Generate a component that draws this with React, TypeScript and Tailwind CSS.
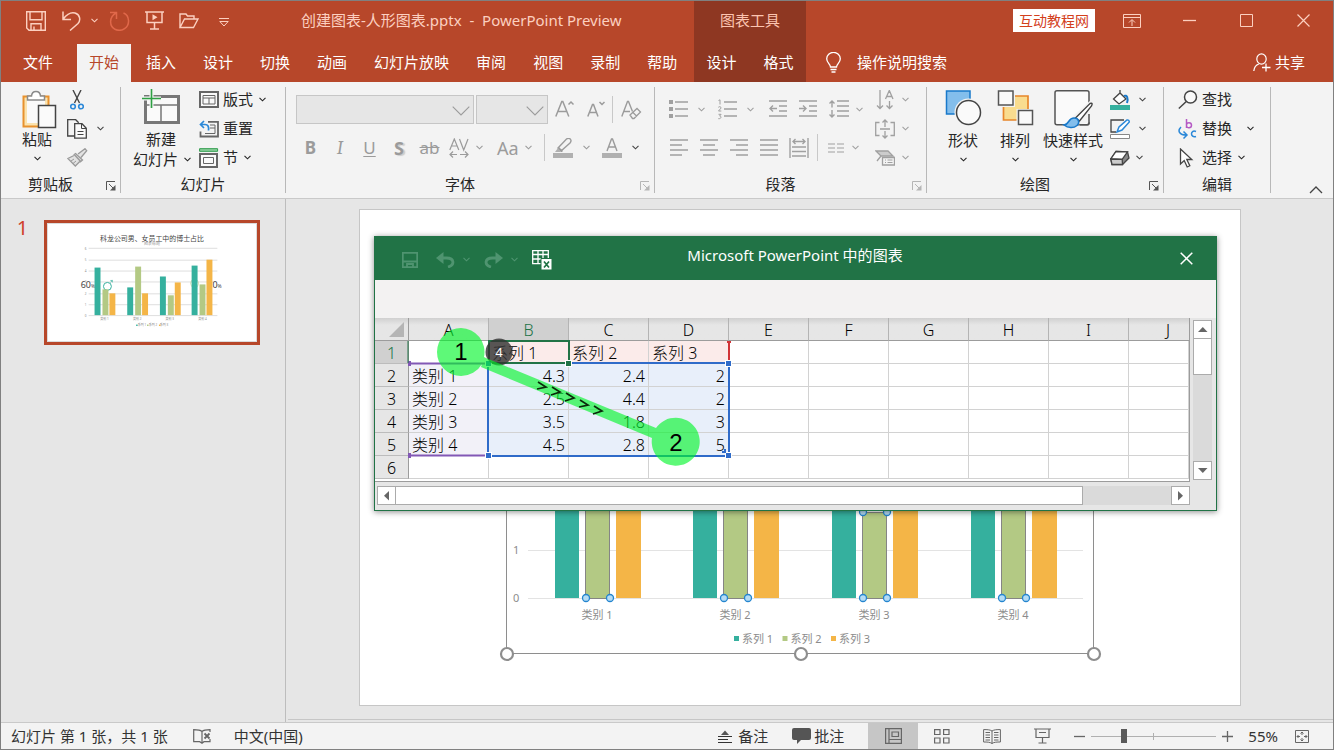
import { type ReactNode } from "react";
import { clsx } from "clsx";

/* ---------- shared bits ---------- */

function Ico({ w = 20, h = 20, className, children }: { w?: number; h?: number; className?: string; children: ReactNode }) {
  return (
    <svg
      width={w}
      height={h}
      viewBox={`0 0 ${w} ${h}`}
      fill="none"
      stroke="currentColor"
      className={clsx("shrink-0", className)}
      aria-hidden="true"
    >
      {children}
    </svg>
  );
}

function Chevron({ className }: { className?: string }) {
  return (
    <Ico w={7} h={5} className={className}>
      <path d="M.5 .8 3.5 3.8 6.5 .8" strokeWidth="1.1" />
    </Ico>
  );
}

function Btn({ label, className, children }: { label?: string; className?: string; children: ReactNode }) {
  return (
    <button type="button" aria-label={label} className={clsx("flex shrink-0 items-center", className)}>
      {children}
    </button>
  );
}

function Group({ label, launcher, className, children }: { label: string; launcher?: "on" | "off"; className?: string; children: ReactNode }) {
  return (
    <>
      <section className={clsx("flex shrink-0 flex-col", className)} aria-label={label}>
        <div className="flex-1">{children}</div>
        <div className="flex h-6 items-center pb-1">
          <span className="flex-1 text-center text-[15px] leading-5">{label}</span>
          {launcher && (
            <Btn label={`${label}设置`} className={clsx("w-5 pl-1.5 pt-1", launcher === "off" ? "text-[#b5b5b5]" : "text-[#555]")}>
              <Ico w={10} h={10}>
                <path d="M.5 9V.5H9M3 3l5 5" />
                <path d="M9.5 4v5.500H4z" fill="currentColor" stroke="none" />
              </Ico>
            </Btn>
          )}
        </div>
      </section>
      <div className="my-[5px] w-px shrink-0 bg-[#b8b8b8]" />
    </>
  );
}

/* ---------- title bar and tabs ---------- */

const tabs = ["插入", "设计", "切换", "动画", "幻灯片放映", "审阅", "视图", "录制", "帮助"];

function Header() {
  return (
    <header className="flex h-[81px] bg-[#b7472a] text-white">
      <div className="flex w-[693px] shrink-0 flex-col">
        <div className="flex h-[43px] items-center pb-1 pl-[25px] text-[#fcd0c0]">
          <Btn label="保存" className="w-9">
            <Ico>
              <path d="M.7.7h18.6v18.6H3L.7 17z M4 .7v8h12v-8 M5 19.3v-6.500h10v6.500 M8 19v-3.500" strokeWidth="1.4" />
            </Ico>
          </Btn>
          <Btn label="撤消" className="w-[47px] gap-2.5">
            <Ico w={19} h={20}>
              <path d="M1 .5v8h8M1.300 8C5 3 9 1 13 2c5 1.500 6 7 3 10.500L8 19.500" strokeWidth="1.5" />
            </Ico>
            <Chevron />
          </Btn>
          <Btn label="恢复" className="w-9 text-[#e0684a]">
            <Ico w={21} h={20}>
              <path d="M1 1.500h6.500V8M7 2C0 6 0 15 6 18.300c7 3.200 14-2 13.500-9C19.300 6 17 3 14.500 2" strokeWidth="1.5" />
            </Ico>
          </Btn>
          <Btn label="从头开始" className="w-[34px]">
            <Ico w={19} h={19}>
              <path d="M0 1h19M2 1v10.500h15V1M9.500 11.500V18M5 18h9" strokeWidth="1.5" />
              <path d="m7.500 3.200 5 3-5 3z" fill="currentColor" stroke="none" />
            </Ico>
          </Btn>
          <Btn label="打开" className="w-10">
            <Ico w={20} h={16}>
              <path d="M1 14.500V1h6l1.500 2H15v3M1 14.500 5.500 6H19l-4.500 8.500z" strokeWidth="1.4" />
            </Ico>
          </Btn>
          <Btn label="自定义快速访问工具栏">
            <Ico w={10} h={9} className="mt-1">
              <path d="M0 .5h10M.8 3.500h8.400L5 8z" />
            </Ico>
          </Btn>
          <h1 className="ml-[72px] whitespace-pre text-[15px]">创建图表-人形图表.pptx  -  PowerPoint Preview</h1>
        </div>
        <nav className="flex flex-1 gap-[3px] pl-2.5 text-[15px]">
          <button className="mr-[9px] px-3 pb-0.5">文件</button>
          <button className="bg-[#f3f3f3] px-3 pb-0.5 text-[#b7472a]">开始</button>
          {tabs.map((t) => (
            <button key={t} className="px-3 pb-0.5">
              {t}
            </button>
          ))}
        </nav>
      </div>

      {/* contextual tab set */}
      <div className="flex w-28 shrink-0 flex-col bg-[#8e3722] text-[15px]">
        <div className="flex h-[43px] items-center justify-center pb-1 text-[#fcc4b0]">图表工具</div>
        <div className="flex flex-1 items-center justify-center gap-[27px] pb-0.5">
          <button>设计</button>
          <button>格式</button>
        </div>
      </div>

      <div className="flex flex-1 flex-col">
        <div className="flex h-[43px] items-center justify-end pb-1 pr-[23px] text-[#fcd0c0]">
          <span className="mr-7 bg-white px-1.5 text-[14px] leading-[23px] text-[#d3401c]">互动教程网</span>
          <Btn label="功能区显示选项" className="mr-[42px]">
            <Ico w={18} h={14}>
              <path d="M.5.5h17v13H.5zM.5 3.500h17M9 12V6M6 8.500l3-3 3 3" />
            </Ico>
          </Btn>
          <Btn label="最小化" className="mr-11">
            <Ico w={13} h={13}>
              <path d="M0 6.500h13" strokeWidth="1.300" />
            </Ico>
          </Btn>
          <Btn label="最大化" className="mr-11">
            <Ico w={13} h={13}>
              <path d="M.5.5h12v12H.5z" />
            </Ico>
          </Btn>
          <Btn label="关闭">
            <Ico w={13} h={13}>
              <path d="m.5.500 12 12M12.500.5l-12 12" strokeWidth="1.200" />
            </Ico>
          </Btn>
        </div>
        <div className="flex flex-1 items-center justify-between pb-0.5 pl-5 pr-7 text-[15px]">
          <Btn className="gap-4">
            <Ico w={15} h={21}>
              <path d="M4.500 15c0-3-3.800-4-3.800-8.200A6.700 6.300 0 0 1 14.300 6.800c0 4.200-3.800 5.200-3.800 8.200zM4.500 17.500h6M5.500 20h4" strokeWidth="1.300" />
            </Ico>
            操作说明搜索
          </Btn>
          <Btn className="gap-1">
            <Ico w={18} h={19}>
              <ellipse cx="8.500" cy="6" rx="4.700" ry="5.200" strokeWidth="1.200" />
              <path d="M.8 18c.4-4 2.200-6 5-7M13 18.500v-8M9 14.500h8.500" strokeWidth="1.300" />
            </Ico>
            共享
          </Btn>
        </div>
      </div>
    </header>
  );
}

/* ---------- ribbon ---------- */

function ClipboardGroup() {
  return (
    <Group label="剪贴板" launcher="on" className="w-[119px]">
      <div className="flex pt-[3px]">
        <Btn className="ml-[14px] w-11 flex-col pt-[5px] text-[15px] leading-5">
          <Ico w={36} h={39} className="ml-1">
            <path d="M2.500 6.500h25v30h-25z" stroke="#e8912d" strokeWidth="2" fill="#fbe3ae" />
            <path d="M6 10h18v23H6z" fill="#fafafa" stroke="none" />
            <path d="M6.500 10V6h4C11 0 19 0 19.500 6h4v4z" fill="#fff" stroke="#8a8a8a" strokeWidth="1.500" />
            <path d="M17.500 15.500h17v22h-17z" fill="#fafafa" stroke="#444" strokeWidth="1.500" />
          </Ico>
          粘贴
          <Chevron className="mt-[7px]" />
        </Btn>
        <div className="ml-2">
          <Btn label="剪切" className="h-[29px] pl-[3px]">
            <Ico w={14} h={20}>
              <path d="M3 0l6.500 13M11 0 4.500 13" stroke="#444" strokeWidth="1.400" />
              <circle cx="3" cy="16.500" r="2.300" stroke="#2b88d8" strokeWidth="1.600" />
              <circle cx="11" cy="16.500" r="2.300" stroke="#2b88d8" strokeWidth="1.600" />
            </Ico>
          </Btn>
          <Btn label="复制" className="h-[29px] gap-2.5 text-[#444]">
            <Ico w={20} h={20}>
              <path d="M7.500 17H.7V.7h8l3 3" strokeWidth="1.300" />
              <path d="M7.700 4.700h7.300l4.300 4.500v10H7.700z" fill="#fafafa" strokeWidth="1.300" />
              <path d="M14.500 5v4.500H19M10.500 12.500h6M10.500 15.500h6" />
            </Ico>
            <Chevron />
          </Btn>
          <Btn label="格式刷" className="h-[29px] text-[#9a9a9a]">
            <Ico w={21} h={19}>
              <path d="m11 6 7-5.300 1.700 2L14 9.500M8.500 5.500l7 6.500-1.800 1.500-6.500-7zM7 7.500.8 10.500l7.500 7.500 5-5" fill="#e2e2e2" strokeWidth="1.300" />
              <path d="m4 13 3-2M6 15.500l3-2.500" />
            </Ico>
          </Btn>
        </div>
      </div>
    </Group>
  );
}

function SlidesGroup() {
  return (
    <Group label="幻灯片" className="w-[164px]">
      <div className="flex pt-[3px]">
        <Btn className="ml-[10px] w-[60px] flex-col pt-1 text-[15px] leading-5">
          <Ico w={38} h={36}>
            <path d="M3.500 7.500h33v26h-33z" stroke="#777" strokeWidth="3" fill="#fafafa" />
            <path d="M5 16h30M19 16v17" stroke="#777" strokeWidth="1.500" />
            <path d="M0 9.500h19M9.500 0v19" stroke="#f3f3f3" strokeWidth="4" />
            <path d="M0 9.500h19M9.500 0v19" stroke="#2ea043" strokeWidth="1.600" />
          </Ico>
          <span className="mt-1">新建</span>
          <span className="flex items-center gap-1.5 pl-0.5">
            幻灯片
            <Chevron />
          </span>
        </Btn>
        <div className="ml-2 text-[15px]">
          <Btn className="h-[29px] gap-1">
            <Ico w={20} h={17} className="text-[#666]">
              <path d="M1 1h18v15H1z" strokeWidth="2" fill="#fafafa" />
              <path d="M4 4.500h12v8.500H4zM4 7h12M10 7v6" />
            </Ico>
            版式
            <Chevron className="ml-0.5" />
          </Btn>
          <Btn className="h-[29px] gap-1">
            <Ico w={20} h={18} className="text-[#666]">
              <path d="M9 1.800h10v14.700H1.500v-5" strokeWidth="1.800" />
              <path d="M11 5h5v8.500H6M11 8h5" />
              <path d="M5 1 1.500 4.500 5 8M2 4.500h4c3 0 4 2 3.500 6" stroke="#2b88d8" strokeWidth="1.700" />
            </Ico>
            重置
          </Btn>
          <Btn className="h-[29px] gap-1">
            <Ico w={20} h={20} className="text-[#666]">
              <path d="M.6.700h18v2.600H.6z" fill="#8fd19e" stroke="#2e9b4b" />
              <path d="M1 6h17v13H1z" strokeWidth="2" fill="#fafafa" />
              <path d="M4.500 9.500h10v6h-10z" />
            </Ico>
            节
            <Chevron className="ml-0.5" />
          </Btn>
        </div>
      </div>
    </Group>
  );
}

function Combo({ label, className }: { label: string; className: string }) {
  return (
    <div className={clsx("relative h-[29px]", className)}>
      <select aria-label={label} disabled className="h-full w-full appearance-none border border-[#c6c6c6] bg-[#e6e6e6]" />
      <Ico w={18} h={10} className="pointer-events-none absolute right-1 top-[11px]">
        <path d="m.7.700 8.300 8.300L17.300.7" strokeWidth="1.100" />
      </Ico>
    </div>
  );
}

function FontGroup() {
  return (
    <Group label="字体" launcher="off" className="w-[368px]">
      <div className="pl-[10px] pt-[13px] text-[#9b9b9b]">
        <div className="flex items-center">
          <Combo label="字体名称" className="w-[178px]" />
          <Combo label="字号" className="ml-0.5 w-[72px]" />
          <Btn label="增大字号" className="ml-[7px] w-8">
            <Ico w={20} h={20}>
              <path d="m.8 16.500 6-15h1l6 15M3 11.500h8.500M13.500 4.500 16 2l2.500 2.500" strokeWidth="1.500" />
            </Ico>
          </Btn>
          <Btn label="减小字号" className="w-[25px]">
            <Ico w={18} h={20}>
              <path d="m.8 16.500 4.700-12h1l4.500 12M2.500 12.500h7M12.500 2 15 4.500 17.500 2" strokeWidth="1.500" />
            </Ico>
          </Btn>
          <span className="h-[27px] w-px bg-[#c8c8c8]" />
          <Btn label="清除格式" className="ml-2">
            <Ico w={21} h={20}>
              <path d="M.8 16.500 6.500 1.500h1l4 10M3 11.500h6" strokeWidth="1.400" />
              <path d="m9 15 7-6.500 3.500 3.500-6.500 6.500h-1.500zM12 12.500l3.500 3.500" fill="#f3f3f3" strokeWidth="1.300" />
            </Ico>
          </Btn>
        </div>
        <div className="mt-[9px] flex h-[29px] items-center text-[19px] leading-6">
          <button className="w-[29px] text-[17px] font-bold" aria-label="加粗">B</button>
          <button className="w-[30px] font-serif italic" aria-label="倾斜">I</button>
          <button className="w-[29px] text-[17px] underline underline-offset-2" aria-label="下划线">U</button>
          <button className="w-[30px] text-[18px] font-bold [text-shadow:2px_1px_1px_#ccc]" aria-label="阴影">S</button>
          <button className="w-[31px] text-[17px] line-through" aria-label="删除线">ab</button>
          <Btn label="字符间距" className="w-[48px] gap-[7px] pl-1">
            <Ico w={20} h={20}>
              <path d="m.8 12 4.500-11 4.500 11M2.300 8h6M10.500 1 14.700 12 19 1M1 16.500h7M4 13.500l-3 3 3 3M11 16.500h8M16 13.500l3 3-3 3" strokeWidth="1.200" />
            </Ico>
            <Chevron />
          </Btn>
          <Btn label="更改大小写" className="w-[51px] gap-1.5 pl-1 text-[18px]">
            Aa
            <Chevron />
          </Btn>
          <span className="h-[27px] w-px bg-[#c8c8c8]" />
          <Btn label="突出显示" className="ml-2 w-[49px] gap-[10px]">
            <Ico w={20} h={20}>
              <path d="M5 10 13.500 1c3-2 6 1 3.500 4l-9 8zM5.500 9.500l4 4" strokeWidth="1.400" />
              <path d="M2 14h6l-3-4zM0 15h20v5H0z" fill="#b0b0b0" stroke="none" />
            </Ico>
            <Chevron />
          </Btn>
          <Btn label="字体颜色" className="gap-[10px]">
            <Ico w={20} h={20}>
              <path d="M5 13 9.500 1h1L15 13M6.500 9h7" strokeWidth="1.400" />
              <path d="M0 15h20v5H0z" fill="#b0b0b0" stroke="none" />
            </Ico>
            <Chevron className="text-[#444]" />
          </Btn>
        </div>
      </div>
    </Group>
  );
}

function Lines({ d, label, w = 18, className }: { d: string; label: string; w?: number; className?: string }) {
  return (
    <Btn label={label} className={className}>
      <Ico w={w} h={20}>
        <path d={d} strokeWidth="1.400" />
      </Ico>
    </Btn>
  );
}

function ParagraphGroup() {
  return (
    <Group label="段落" launcher="off" className="w-[271px]">
      <div className="flex text-[#a0a0a0]">
        <div className="w-[206px] pt-[13px]">
          <div className="flex h-[28px] items-center pl-[14px]">
            <Btn label="项目符号" className="w-[49px] gap-2.5">
              <Ico w={19} h={20}>
                <path d="M0 1h4v4H0zM0 8h4v4H0zM0 15h4v4H0z" fill="currentColor" stroke="none" />
                <path d="M6 3h13M6 10h13M6 17h13" strokeWidth="1.400" />
              </Ico>
              <Chevron />
            </Btn>
            <Btn label="编号" className="w-[51px] gap-2.5">
              <Ico w={19} h={21}>
                <path d="M6 3h13M6 10h13M6 17h13" strokeWidth="1.400" />
                <path d="M.5 1.500 2 .8v4.700M.3 8.300c1-1.200 3-.6 2.700.8L.5 12H3.300M.5 15.300h2.600L1.600 17c2 0 2 3-1.300 2.700" />
              </Ico>
              <Chevron />
            </Btn>
            <Lines label="减少缩进" className="w-[30px]" d="M0 2h18M10 7h8M10 12h8M0 17h18M8 9.500H1M4 6.500l-3 3 3 3" />
            <Lines label="增加缩进" className="w-[30px]" d="M0 2h18M10 7h8M10 12h8M0 17h18M0 9.500h7M4 6.500l3 3-3 3" />
            <Btn label="行距" className="gap-[7px]">
              <Ico w={20} h={20}>
                <path d="M8 2h12M8 7h12M8 12h12M8 17h12M3 2v6.500M3 11v7M.5 4.500 3 2l2.500 2.500M.5 15.500 3 18l2.500-2.500" strokeWidth="1.400" />
              </Ico>
              <Chevron />
            </Btn>
          </div>
          <div className="mt-[10px] flex h-[29px] items-center pl-[15px]">
            <Lines label="左对齐" className="w-[30px]" d="M0 2h18M0 7h12M0 12h18M0 17h12" />
            <Lines label="居中" className="w-[30px]" d="M0 2h18M3 7h12M0 12h18M3 17h12" />
            <Lines label="右对齐" className="w-[30px]" d="M0 2h18M6 7h12M0 12h18M6 17h12" />
            <Lines label="两端对齐" className="w-[29px]" d="M0 2h18M0 7h18M0 12h18M0 17h18" />
            <Lines label="分散对齐" className="w-7" w={20} d="M1 0v20M19 0v20M3 9h14M3 13.500h14M3 18h14M4 3.500h12M6.500 1 4 3.500 6.500 6M13.500 1 16 3.500 13.500 6" />
            <span className="h-[27px] w-px bg-[#c8c8c8]" />
            <Btn label="分栏" className="gap-2 pl-2.5">
              <Ico w={16} h={10}>
                <path d="M0 1h7M0 5h7M0 9h7M9 1h7M9 5h7M9 9h7" strokeWidth="1.200" />
              </Ico>
              <Chevron />
            </Btn>
          </div>
        </div>
        <div className="pl-[14px] pt-[3px]">
          <Btn label="文字方向" className="h-[29px] gap-[7px]">
            <Ico w={20} h={20}>
              <path d="M5 0v18M2 15.500 5 18.500l3-3M14.500 11v7M11.500 15.500l3 3 3-3M10.500 9 14.300.5 18 9M12 6.500h5" strokeWidth="1.300" />
            </Ico>
            <Chevron />
          </Btn>
          <Btn label="对齐文本" className="h-[29px] gap-[7px]">
            <Ico w={20} h={20}>
              <path d="M4.500 3.500H.7v13h3.800M15.500 3.500h3.800v13h-3.800M5 10h10M10 1v7M10 12v7M7.500 3.500 10 1l2.500 2.500M7.500 16.500 10 19l2.500-2.500" strokeWidth="1.300" />
            </Ico>
            <Chevron />
          </Btn>
          <Btn label="转换为 SmartArt" className="h-[29px] gap-[7px]">
            <Ico w={20} h={16}>
              <path d="M1 1h12l5 5H6L2 11l4-5z" fill="#ccc" strokeWidth="1.300" />
              <path d="M7.500 7.500h12v7.500h-12z" fill="#f3f3f3" strokeWidth="1.300" />
              <path d="M10 10h1M12.500 10h5M10 12.500h1M12.500 12.500h5" />
            </Ico>
            <Chevron />
          </Btn>
        </div>
      </div>
    </Group>
  );
}

function DrawingGroup() {
  const big = "flex-col pt-[5px] text-[15px] leading-5";
  return (
    <Group label="绘图" launcher="on" className="w-[236px]">
      <div className="flex pt-[3px]">
        <Btn className={clsx("ml-[10px] w-[52px]", big)}>
          <Ico w={37} h={36}>
            <path d="M1.500 1h23.500v23H1.500z" fill="#83beec" stroke="#1979ca" strokeWidth="1.500" />
            <circle cx="23.500" cy="22.500" r="14" fill="#f3f3f3" stroke="none" />
            <circle cx="23.500" cy="22.500" r="12" fill="#fafafa" stroke="#444" strokeWidth="1.500" />
          </Ico>
          <span className="mt-1">形状</span>
          <Chevron className="mt-[7px]" />
        </Btn>
        <Btn className={clsx("w-[52px]", big)}>
          <Ico w={37} h={36}>
            <path d="M6.500 6h24.500v24H6.500z" fill="#f9dc8f" stroke="#e8872b" strokeWidth="1.700" />
            <path d="M0 0h18v17H0zM19.500 19H37v17H19.500z" fill="#f3f3f3" stroke="none" />
            <path d="M1.500 1h14.500v14H1.500zM21.500 20.500h14v14h-14z" fill="#fafafa" stroke="#555" strokeWidth="1.500" />
          </Ico>
          <span className="mt-1">排列</span>
          <Chevron className="mt-[7px]" />
        </Btn>
        <Btn className={clsx("w-16", big)}>
          <Ico w={40} h={40} className="ml-0.5">
            <path d="M3 .8h30q2 0 2 2v30q0 2-2 2H3q-2 0-2-2v-30q0-2 2-2z" fill="#fafafa" stroke="#555" strokeWidth="1.500" />
            <path d="m19 26 18-16v22l-16 3z" fill="#f3f3f3" stroke="none" />
            <path d="M35 24v9q0 1.800-2 1.800h-7" stroke="#555" strokeWidth="1.500" />
            <path d="M21.500 28 36 13.500c2.500-1 2.500 0 1.500 2.500L25.500 31z" fill="#fff" stroke="#444" strokeWidth="1.400" />
            <path d="M10 35c5 0 4-7 10-7 5 0 6 5 3 7.500-3.500 3-9 2.500-13-.5z" fill="#83beec" stroke="#1979ca" strokeWidth="1.500" />
          </Ico>
          快速样式
          <Chevron className="mt-[7px]" />
        </Btn>
        <div className="ml-[5px] text-[#444]">
          <Btn label="形状填充" className="h-[29px] gap-[9px]">
            <Ico w={20} h={20}>
              <path d="m3.500 9 6.500-6 6 6-7 5zM10 3V0" fill="#fff" strokeWidth="1.300" />
              <path d="M14 6c3-1.500 4.500 2 3 7" stroke="#1979ca" strokeWidth="2" />
              <path d="M0 15h20v5H0z" fill="#35b09e" stroke="none" />
            </Ico>
            <Chevron />
          </Btn>
          <Btn label="形状轮廓" className="h-[29px] gap-[9px]">
            <Ico w={20} h={20}>
              <path d="M6 13H1V1h13" strokeWidth="1.300" />
              <path d="m7 13 2-5 8-7q2-.5 2.300 2L12 11z" fill="#fff" stroke="#2b88d8" strokeWidth="1.500" />
              <path d="M.5 15.500h19v4H.5z" fill="#fff" stroke="#888" />
            </Ico>
            <Chevron />
          </Btn>
          <Btn label="形状效果" className="h-[29px] gap-[6px]">
            <Ico w={20} h={16}>
              <path d="m6 1.500 11.500.3L19 8l-6.500 6.500H2L.8 9z" fill="#888" strokeWidth="1.300" />
              <path d="m6 1.500 11.500.3-5.300 7.500L.8 9z" fill="#fff" strokeWidth="1.300" />
              <path d="m.8 9 11.400.3.3 5.200H2z" fill="#ccc" strokeWidth="1.300" />
            </Ico>
            <Chevron />
          </Btn>
        </div>
      </div>
    </Group>
  );
}

function EditingGroup() {
  return (
    <Group label="编辑" className="w-[106px]">
      <div className="pl-[14px] pt-[3px] text-[15px]">
        <Btn className="h-[29px] gap-1">
          <Ico className="text-[#444]">
            <circle cx="12.500" cy="7" r="6" strokeWidth="1.500" fill="#fafafa" />
            <path d="m8.300 11.500-7.500 7" strokeWidth="1.500" />
          </Ico>
          查找
        </Btn>
        <Btn className="h-[29px] gap-1">
          <Ico>
            <path d="M8.500 0v9M8.500 6.500c0-4 5-3.500 5-.3s-5 3.500-5 .3" stroke="#b559c4" strokeWidth="1.500" />
            <path d="M18 12.500c-6-2.500-6 7 0 5M3 8c-4 4-1.500 8 5.500 8M5.500 12.500 9 16l-3.500 3.500" stroke="#2b88d8" strokeWidth="1.500" />
          </Ico>
          替换
          <Chevron className="ml-[11px]" />
        </Btn>
        <Btn className="h-[29px] gap-1">
          <Ico>
            <path d="M2.500 1v15l3.700-3.500 3 6.500 2.600-1.200-3-6.300h5z" stroke="#444" strokeWidth="1.300" fill="#fff" />
          </Ico>
          选择
          <Chevron className="ml-0.5" />
        </Btn>
      </div>
    </Group>
  );
}

function Ribbon() {
  return (
    <div className="flex h-[117px] border-b border-[#c9c9c9] bg-[#f3f3f3] text-[#262626]">
      <ClipboardGroup />
      <SlidesGroup />
      <FontGroup />
      <ParagraphGroup />
      <DrawingGroup />
      <EditingGroup />
      <Btn label="折叠功能区" className="ml-auto self-end pb-1 pr-[10px] text-[#444]">
        <Ico w={14} h={8}>
          <path d="m1 7 6-6 6 6" strokeWidth="1.300" />
        </Ico>
      </Btn>
    </div>
  );
}

/* ---------- slide thumbnail ---------- */

const thumbBars = [
  { x: 94, tops: [267, 289, 293] },
  { x: 127, tops: [287, 266, 293] },
  { x: 160, tops: [276, 295, 282] },
  { x: 192, tops: [265, 284, 259] },
];
const barFill = ["#35b09e", "#b3c984", "#f4b547"];

function Thumbnails() {
  return (
    <aside className="flex w-[285px] shrink-0 items-start border-r border-[#bdbdbd] pt-[21px]">
      <span className="w-[43px] text-center text-xl leading-4 text-[#d0402b]">1</span>
      <button type="button" aria-label="幻灯片 1" className="w-[216px] border-[3px] border-[#b7472a] bg-white">
        <svg viewBox="47 223 210 118" className="block w-full border border-[#dcdcdc]">
          <g fill="#dedede">
            {[247, 259, 270, 281, 293, 304, 315].map((y) => (
              <rect key={y} x="88" y={y} width="130" height="1" />
            ))}
          </g>
          <text x="80" y="288" fontSize="9" fill="#444">60<tspan fontSize="5">%</tspan></text>
          <text x="213" y="288" fontSize="9" fill="#444">0<tspan fontSize="5">%</tspan></text>
          <circle cx="107" cy="286" r="4" fill="none" stroke="#35b09e" />
          <path d="m110 282 2-2M110 280h2v2" fill="none" stroke="#35b09e" strokeWidth=".7" />
          <circle cx="195" cy="283" r="4" fill="none" stroke="#b3c984" opacity=".6" />
          {thumbBars.map((b) =>
            b.tops.map((t, i) => <rect key={`${b.x}-${i}`} x={b.x + i * 7 + (i > 0 ? 1 : 0)} y={t} width="6" height={315 - t} fill={barFill[i]} />)
          )}
          <text x="152" y="240" fontSize="7" textAnchor="middle" fill="#444">科龙公司男、女员工中的博士占比</text>
          <text x="152" y="244" fontSize="4" textAnchor="middle" fill="#999">图表标题</text>
          <g fontSize="3" fill="#888" textAnchor="middle">
            {[6, 5, 4, 3, 2, 1, 0].map((n, i) => (
              <text key={n} x="85" y={249 + i * 11.300}>{n}</text>
            ))}
            {[104, 137, 170, 203].map((x, i) => (
              <text key={x} x={x} y="320">类别 {i + 1}</text>
            ))}
            {[142, 153, 164].map((x, i) => (
              <text key={x} x={x} y="326">系列 {i + 1}</text>
            ))}
          </g>
          {[136, 147, 159].map((x, i) => (
            <rect key={x} x={x} y="324.500" width="1.500" height="1.500" fill={barFill[i]} />
          ))}
        </svg>
      </button>
    </aside>
  );
}

/* ---------- slide chart ---------- */

const categories = [
  { x: 555, name: "类别 1" },
  { x: 693, name: "类别 2" },
  { x: 832, name: "类别 3" },
  { x: 971, name: "类别 4" },
];

function Dot({ x, y }: { x: number; y: number }) {
  return <circle cx={x} cy={y} r="3.500" fill="#b5dcf5" stroke="#2485cf" strokeWidth="1.300" />;
}

function SlideChart() {
  return (
    <svg viewBox="360 210 880 495" className="block w-full">
      <path d="M506.500 480v173.500h587V480" fill="none" stroke="#8e8e8e" />
      <path d="M528 550.500h555M528 598.500h555" stroke="#e3e3e3" />
      <g fontSize="11" fill="#8c8c8c">
        <text x="513" y="554">1</text>
        <text x="513" y="602">0</text>
      </g>
      {categories.map((c, i) => (
        <g key={c.name}>
          <rect x={c.x} y="490" width="24" height="108" fill={barFill[0]} />
          <rect x={c.x + 30.500} y={i === 2 ? 512.500 : 490} width="24" height={i === 2 ? 86 : 108.500} fill={barFill[1]} stroke="#858585" />
          <rect x={c.x + 61} y="490" width="25" height="108" fill={barFill[2]} />
          {i === 2 && <Dot x={c.x + 31} y={512} />}
          {i === 2 && <Dot x={c.x + 55} y={512} />}
          <Dot x={c.x + 31} y={598} />
          <Dot x={c.x + 55} y={598} />
          <text x={c.x + 42} y="619" fontSize="11" fill="#8c8c8c" textAnchor="middle">{c.name}</text>
        </g>
      ))}
      {["系列 1", "系列 2", "系列 3"].map((s, i) => (
        <g key={s}>
          <rect x={734 + i * 48.500} y="636" width="5" height="5" fill={barFill[i]} />
          <text x={742 + i * 48.500} y="643" fontSize="11" fill="#8c8c8c">{s}</text>
        </g>
      ))}
      {[507, 801, 1094].map((x) => (
        <circle key={x} cx={x} cy="654" r="6" fill="#fff" stroke="#8e8e8e" strokeWidth="2.200" />
      ))}
    </svg>
  );
}

/* ---------- embedded data sheet ---------- */

const columns = ["A", "B", "C", "D", "E", "F", "G", "H", "I", "J"];
const rows = [
  ["", "系列 1", "系列 2", "系列 3"],
  ["类别 1", "4.3", "2.4", "2"],
  ["类别 2", "2.5", "4.4", "2"],
  ["类别 3", "3.5", "1.8", "3"],
  ["类别 4", "4.5", "2.8", "5"],
  [],
];

function cellTone(r: number, c: number) {
  if (r === 0 && c > 0 && c < 4) return "bg-[#fbebea]";
  if (r > 0 && r < 5 && c === 0) return "bg-[#f2f1f8]";
  if (r > 0 && r < 5 && c < 4) return "bg-[#e8effa] text-right";
  return "bg-white";
}

function Sheet() {
  return (
    <table className="w-full table-fixed border-separate border-spacing-0 text-base leading-5 text-black">
      <colgroup>
        <col className="w-[34px]" />
        {columns.map((c) => (
          <col key={c} className={c === "J" ? "" : "w-20"} />
        ))}
      </colgroup>
      <thead>
        <tr className="h-[23px] bg-gradient-to-b from-[#d0d0d0] to-[#e6e6e6] to-30%">
          <th className="border-b border-r border-[#9c9c9c]">
            <Ico w={15} h={15} className="ml-auto mr-1">
              <path d="M15 0v15H0z" fill="#b5b5b5" stroke="none" />
            </Ico>
          </th>
          {columns.map((c) => (
            <th
              key={c}
              className={clsx(
                "h-[23px] border-b border-b-[#9c9c9c] pb-0 pt-0.5 font-light",
                c !== "J" && "border-r border-r-[#b4b4b4]",
                c === "J" && "pl-[18px]",
                c === "B" && "bg-[#d0d0d0] text-[#217346]"
              )}
            >
              {c}
            </th>
          ))}
        </tr>
      </thead>
      <tbody>
        {rows.map((cells, r) => (
          <tr key={r}>
            <th
              className={clsx(
                "h-[23px] border-b border-r border-b-[#bcbcbc] border-r-[#9c9c9c] px-0 pb-0 pt-0.5 font-light",
                r === 0 ? "bg-[#d0d0d0] text-[#217346]" : "bg-[#e6e6e6]"
              )}
            >
              {r + 1}
            </th>
            {columns.map((c, i) => (
              <td key={c} className={clsx("border-b border-r border-[#d2d2d2] px-[3px] pb-0 pt-0.5 font-light", cellTone(r, i))}>
                {cells[i]}
              </td>
            ))}
          </tr>
        ))}
      </tbody>
    </table>
  );
}

function Arrow({ label, d, className }: { label: string; d: string; className?: string }) {
  return (
    <button type="button" aria-label={label} className={clsx("flex h-[19px] w-[19px] shrink-0 items-center justify-center border border-[#ababab] bg-white", className)}>
      <Ico w={11} h={11}>
        <path d={d} fill="#666" stroke="none" />
      </Ico>
    </button>
  );
}

/* range borders plus the numbered drag marks */
function SheetMarks() {
  return (
    <svg width="360" height="170" viewBox="375 318 360 170" className="pointer-events-none absolute left-0 top-0">
      <path d="M409 363.500h79M409 455.500h79" stroke="#8258b5" strokeWidth="2" />
      <path d="M408 361h3v5h-3zM408 453h3v5h-3z" fill="#8258b5" />
      <path d="M729 341v20" stroke="#d13438" strokeWidth="2" />
      <path d="M727 341h4v2h-4z" fill="#d13438" />
      <path d="M408 341v22" stroke="#217346" />
      <rect x="488" y="363" width="241" height="93" fill="none" stroke="#2f6bc9" strokeWidth="2" />
      <rect x="489" y="341" width="80" height="22" fill="none" stroke="#217346" strokeWidth="2" />
      <g fill="#2f6bc9" stroke="#fff">
        <rect x="485.500" y="360.500" width="6" height="6" />
        <rect x="725.500" y="360.500" width="6" height="6" />
        <rect x="485.500" y="452.500" width="6" height="6" />
        <rect x="725.500" y="452.500" width="6" height="6" />
        <rect x="565.500" y="360.500" width="6" height="6" fill="#217346" />
      </g>
      <path d="M725 449v3h-3" stroke="#2f6bc9" fill="none" strokeWidth="2" />
      <circle cx="499" cy="352" r="13.500" fill="#333" opacity=".82" />
      <text x="499" y="357" fontSize="13" fill="#fff" textAnchor="middle">4</text>
      <path
        d="M461 328a24 24 0 1 0 0 48 24 24 0 0 0 21-12l-1 3 171 71a24 24 0 1 0 4-10L486 358l-2-1a24 24 0 0 0-23-29z"
        fill="#00f529"
        opacity=".63"
      />
      <path
        d="m538 382 8 5-9 2M552 387l8 5-9 3M566 393l8 5-9 3M580 400l8 5-9 2M594 406l8 5-9 3"
        fill="none"
        stroke="#0a2a0a"
        strokeWidth="1.700"
      />
      <g fontSize="24" textAnchor="middle" fill="#000" className="font-['Liberation_Sans',Arial,sans-serif]">
        <text x="461" y="360">1</text>
        <text x="676" y="451">2</text>
      </g>
    </svg>
  );
}

function DataWindow() {
  return (
    <div
      role="dialog"
      aria-label="Microsoft PowerPoint 中的图表"
      className="absolute left-[14px] right-[23px] top-[26px] border border-[#217346] bg-[#e6e6e6] shadow-[0_1px_6px_rgba(0,0,0,0.45)]"
    >
      <div className="relative flex h-[43px] items-center bg-[#217346] pl-[27px] pr-[23px] text-[#4f9470]">
        <Btn label="保存" className="mt-0.5 w-[34px]">
          <Ico w={16} h={16}>
            <path d="M.8.800h14.400v14.400H.8zM1 9.500h14M5 15v-3h6V15" strokeWidth="1.800" />
          </Ico>
        </Btn>
        <Btn label="撤消" className="mt-0.5 w-12 gap-2">
          <Ico w={19} h={16}>
            <path d="M3 6h7.500c8 0 8.500 7 1.500 9" strokeWidth="2.800" />
            <path d="M7.500 0v12L0 6z" fill="currentColor" stroke="none" />
          </Ico>
          <Chevron />
        </Btn>
        <Btn label="恢复" className="mt-0.5 w-12 gap-2">
          <Ico w={19} h={16}>
            <path d="M16 6H8.500C.5 6 0 13 7 15" strokeWidth="2.800" />
            <path d="M11.500 0v12L19 6z" fill="currentColor" stroke="none" />
          </Ico>
          <Chevron />
        </Btn>
        <Btn label="在 Microsoft Excel 中编辑数据" className="mt-0.5 text-white">
          <Ico w={20} h={20}>
            <path d="M.7.700h15.600v13H.7zM.7 4.500h15.600M.7 9h15.600M6 .7v13M11 .7v13" strokeWidth="1.300" />
            <path d="M9 8.500h11V20H9z" fill="#fff" stroke="#217346" />
            <path d="m12 11.500 5 6M17 11.500l-5 6" stroke="#217346" strokeWidth="1.700" />
          </Ico>
        </Btn>
        <h2 className="flex-1 pb-1.5 pr-[142px] text-center text-[15px] text-white">Microsoft PowerPoint 中的图表</h2>
        <Btn label="关闭" className="text-white">
          <Ico w={13} h={13}>
            <path d="m.7.700 11.600 11.600M12.300.7.700 12.300" strokeWidth="1.500" />
          </Ico>
        </Btn>
      </div>
      <div className="h-[38px] bg-[#f3f2f2]" />
      <div className="flex">
        <div className="relative h-[164px] min-w-0 flex-1 overflow-hidden border-b border-r border-[#9c9c9c] bg-white">
          <Sheet />
        </div>
        <div className="mb-0.5 ml-[3px] mr-1 mt-0.5 flex flex-col bg-[#dadada]">
          <Arrow label="向上滚动" d="M1 8h9.500L5.800 3z" />
          <div className="h-9 border border-t-0 border-[#ababab] bg-white" />
          <Arrow label="向下滚动" d="M1 3h9.500L5.800 8z" className="mt-auto" />
        </div>
      </div>
      <div className="mb-[5px] ml-0.5 mr-[26px] mt-1 flex bg-[#dadada]">
        <Arrow label="向左滚动" d="M8 1v9.500L3 5.800z" />
        <div className="mr-[88px] flex-1 border border-l-0 border-[#ababab] bg-white" />
        <Arrow label="向右滚动" d="M3 1v9.500l5-4.700z" />
      </div>
      <div className="absolute left-0 top-[81px]">
        <SheetMarks />
      </div>
    </div>
  );
}

/* ---------- status bar ---------- */

function StatusBar() {
  return (
    <footer className="flex h-[27px] items-center border-t border-[#c9c9c9] bg-[#f3f3f3] pl-2.5 text-[15px] text-[#333]">
      <span>幻灯片 第 1 张，共 1 张</span>
      <Btn label="拼写检查" className="ml-[25px]">
        <Ico w={18} h={15} className="text-[#666]">
          <path d="M9 13.500V2.500C7 .7 4 .7.700.7v12h6l2.300 1.500 2-1.500h6V10M9 2.500c2-1.800 5-1.800 8-1.800V3" strokeWidth="1.200" />
          <path d="m11.500 4.500 5 5M16.500 4.500l-5 5" strokeWidth="1.800" />
        </Ico>
      </Btn>
      <button className="ml-[23px]">中文(中国)</button>
      <div className="ml-auto flex h-full items-center text-[#666]">
        <Btn className="gap-1.5 text-[#333]">
          <Ico w={14} h={13}>
            <path d="M3 5 7 .5 11 5z" fill="#555" stroke="none" />
            <path d="M0 6.500h14M0 9.500h10M0 12.500h14" />
          </Ico>
          备注
        </Btn>
        <Btn className="ml-6 gap-[3px] text-[#333]">
          <Ico w={19} h={16}>
            <path d="M2 0h15q2 0 2 2v8q0 2-2 2H9l-4 4v-4H2q-2 0-2-2V2Q0 0 2 0z" fill="#555" stroke="none" />
          </Ico>
          批注
        </Btn>
        <Btn label="普通视图" className="ml-6 h-full w-[50px] justify-center bg-[#c6c6c6]">
          <Ico w={17} h={16}>
            <path d="M.6.600h15.800v14.800H.6zM4 .6v14.800M4 11.500h12.400M7 4h6.500v4.500H7z" strokeWidth="1.200" />
          </Ico>
        </Btn>
        <Btn label="幻灯片浏览" className="ml-4">
          <Ico w={16} h={15}>
            <path d="M.6.600h5.400v4.900H.6zM9.600.6H15v4.900H9.600zM.6 9H6v5H.6zM9.600 9H15v5H9.600z" strokeWidth="1.200" />
          </Ico>
        </Btn>
        <Btn label="阅读视图" className="ml-[33px]">
          <Ico w={18} h={15}>
            <path d="M9 2v12.500M9 2C7 .6 4 .6.600.6v12.400c3.400 0 6.400 0 8.400 1.500 2-1.500 5-1.500 8.400-1.500V.6C14 .6 11 .6 9 2zM2.500 3.500H7M2.500 6H7M2.500 8.500H7M2.500 11H7M11 3.500h4.500M11 6h4.500M11 8.500h4.500M11 11h4.500" />
          </Ico>
        </Btn>
        <Btn label="幻灯片放映" className="ml-[33px]">
          <Ico w={17} h={16}>
            <path d="M0 1h17M2 1v8.500h13V1M5 4.500h7M8.500 9.500V15M4.500 15h8" strokeWidth="1.200" />
          </Ico>
        </Btn>
        <Btn label="缩小" className="ml-[23px]">
          <Ico w={11} h={11}>
            <path d="M0 5.500h11" strokeWidth="1.300" />
          </Ico>
        </Btn>
        <input
          type="range"
          aria-label="缩放"
          min={0}
          max={100}
          defaultValue={25}
          className="mx-1.5 h-[15px] w-[125px] appearance-none bg-[linear-gradient(#b0b0b0,#b0b0b0),linear-gradient(#b0b0b0,#b0b0b0)] bg-[length:100%_1px,1px_7px] bg-center bg-no-repeat [&::-webkit-slider-thumb]:h-[14px] [&::-webkit-slider-thumb]:w-1.5 [&::-webkit-slider-thumb]:appearance-none [&::-webkit-slider-thumb]:bg-[#5a5a5a]"
        />
        <Btn label="放大">
          <Ico w={11} h={11}>
            <path d="M0 5.500h11M5.500 0v11" strokeWidth="1.300" />
          </Ico>
        </Btn>
        <button className="ml-[15px] text-[#333]">55%</button>
        <Btn label="适应窗口" className="ml-[17px] mr-6">
          <Ico w={14} h={13}>
            <path d="M.5.500h13v12H.5zM7 2v3M7 8v3M2 6.500h3M9 6.500h3M5.500 3.500 7 2l1.500 1.500M5.500 9.500 7 11l1.500-1.500M3.500 5 2 6.500 3.500 8M10.500 5 12 6.500 10.500 8" />
          </Ico>
        </Btn>
      </div>
    </footer>
  );
}

export default function App() {
  return (
    <div className="flex min-h-screen flex-col border border-[#808080] bg-[#e6e6e6] font-['Noto_Sans','Noto_Sans_CJK_SC',sans-serif]">
      <Header />
      <Ribbon />
      <div className="flex flex-1 items-stretch">
        <Thumbnails />
        <main className="mb-0.5 ml-0.5 flex-1 border-b border-[#c6c6c6]">
          <div className="relative ml-[71px] mr-[92px] mt-[10px] border border-[#c6c6c6] bg-white">
            <SlideChart />
            <DataWindow />
          </div>
        </main>
      </div>
      <StatusBar />
    </div>
  );
}
